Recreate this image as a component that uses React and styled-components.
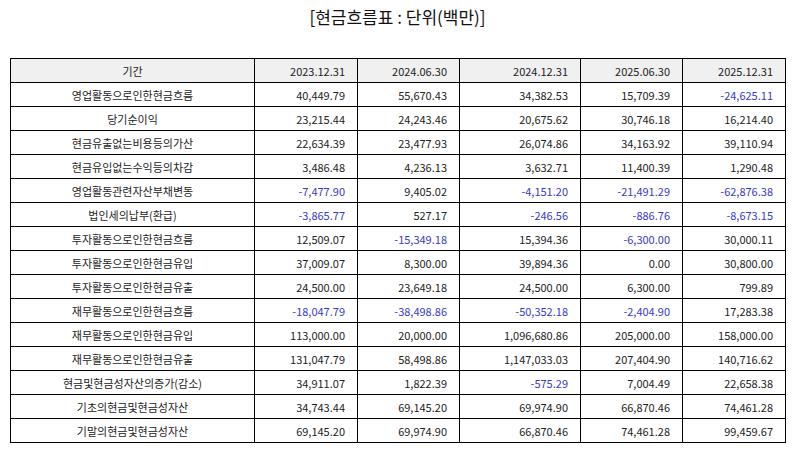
import React from "react";
import styled, { createGlobalStyle } from "styled-components";

const GlobalStyle = createGlobalStyle`
  body {
    margin: 0;
    background: #ffffff;
    font-family: "Noto Sans CJK KR", "Noto Sans", sans-serif;
    color: #222;
  }
`;

const Page = styled.div`
  width: 795px;
  height: 452px;
  box-sizing: border-box;
  padding: 0 10px;
`;

const Title = styled.h1`
  margin: 0;
  height: 38px;
  padding-top: 4px;
  box-sizing: border-box;
  text-align: center;
  font-size: 17px;
  font-weight: 400;
  color: #111;
  line-height: 26px;
`;

const Table = styled.table`
  margin-top: 20px;
  width: 775px;
  border-collapse: collapse;
  table-layout: fixed;
  font-size: 11px;
`;

const Th = styled.th`
  height: 23px;
  padding: 0 12px;
  border: 1.3px solid #000;
  background: #f0f0f0;
  font-weight: 400;
  color: #222;
  text-align: ${(p) => (p.$label ? "center" : "right")};
`;

const Td = styled.td`
  height: 23px;
  padding: 0 12px;
  border: 1.3px solid #000;
  color: ${(p) => (p.$neg ? "#3838cc" : "#222")};
  text-align: ${(p) => (p.$label ? "center" : "right")};
  white-space: nowrap;
`;

const periods = ["2023.12.31", "2024.06.30", "2024.12.31", "2025.06.30", "2025.12.31"];
const widths = [244, 103, 102, 121, 102, 103];

const rows = [
  ["영업활동으로인한현금흐름", "40,449.79", "55,670.43", "34,382.53", "15,709.39", "-24,625.11"],
  ["당기순이익", "23,215.44", "24,243.46", "20,675.62", "30,746.18", "16,214.40"],
  ["현금유출없는비용등의가산", "22,634.39", "23,477.93", "26,074.86", "34,163.92", "39,110.94"],
  ["현금유입없는수익등의차감", "3,486.48", "4,236.13", "3,632.71", "11,400.39", "1,290.48"],
  ["영업활동관련자산부채변동", "-7,477.90", "9,405.02", "-4,151.20", "-21,491.29", "-62,876.38"],
  ["법인세의납부(환급)", "-3,865.77", "527.17", "-246.56", "-886.76", "-8,673.15"],
  ["투자활동으로인한현금흐름", "12,509.07", "-15,349.18", "15,394.36", "-6,300.00", "30,000.11"],
  ["투자활동으로인한현금유입", "37,009.07", "8,300.00", "39,894.36", "0.00", "30,800.00"],
  ["투자활동으로인한현금유출", "24,500.00", "23,649.18", "24,500.00", "6,300.00", "799.89"],
  ["재무활동으로인한현금흐름", "-18,047.79", "-38,498.86", "-50,352.18", "-2,404.90", "17,283.38"],
  ["재무활동으로인한현금유입", "113,000.00", "20,000.00", "1,096,680.86", "205,000.00", "158,000.00"],
  ["재무활동으로인한현금유출", "131,047.79", "58,498.86", "1,147,033.03", "207,404.90", "140,716.62"],
  ["현금및현금성자산의증가(감소)", "34,911.07", "1,822.39", "-575.29", "7,004.49", "22,658.38"],
  ["기초의현금및현금성자산", "34,743.44", "69,145.20", "69,974.90", "66,870.46", "74,461.28"],
  ["기말의현금및현금성자산", "69,145.20", "69,974.90", "66,870.46", "74,461.28", "99,459.67"],
];

export default function App() {
  return (
    <Page>
      <GlobalStyle />
      <Title>[현금흐름표 : 단위(백만)]</Title>
      <Table>
        <colgroup>
          {widths.map((w, i) => (
            <col key={i} style={{ width: w }} />
          ))}
        </colgroup>
        <thead>
          <tr>
            <Th $label>기간</Th>
            {periods.map((p) => (
              <Th key={p}>{p}</Th>
            ))}
          </tr>
        </thead>
        <tbody>
          {rows.map(([label, ...vals]) => (
            <tr key={label}>
              <Td $label>{label}</Td>
              {vals.map((v, i) => (
                <Td key={i} $neg={v.startsWith("-")}>{v}</Td>
              ))}
            </tr>
          ))}
        </tbody>
      </Table>
    </Page>
  );
}
